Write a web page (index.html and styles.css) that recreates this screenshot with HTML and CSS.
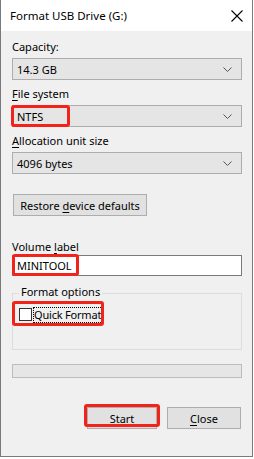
FILE: index.html
```html
<!DOCTYPE html>
<html>
<head>
<meta charset="UTF-8">
<title>Format USB Drive (G:)</title>
<link rel="stylesheet" href="styles.css">
</head>
<body>
<div class="window">
    <div class="titlebar">
        <span class="title">Format USB Drive (G:)</span>
        <svg class="close-x" width="12" height="12" viewBox="0 0 12 12">
            <path d="M0.5 0.5 L11.5 11.5 M11.5 0.5 L0.5 11.5" stroke="#000" stroke-width="1.1" fill="none"/>
        </svg>
    </div>

    <div class="content">
        <div class="label first">Capacity:</div>
        <div class="select">
            <span>14.3 GB</span>
            <svg class="caret" width="9" height="5" viewBox="0 0 9 5"><path d="M0.5 0.5 L4.5 4.5 L8.5 0.5" stroke="#555" fill="none"/></svg>
        </div>

        <div class="label"><u>F</u>ile system</div>
        <div class="select">
            <span>NTFS</span>
            <svg class="caret" width="9" height="5" viewBox="0 0 9 5"><path d="M0.5 0.5 L4.5 4.5 L8.5 0.5" stroke="#555" fill="none"/></svg>
            <div class="mark mark-ntfs"></div>
        </div>

        <div class="label"><u>A</u>llocation unit size</div>
        <div class="select">
            <span>4096 bytes</span>
            <svg class="caret" width="9" height="5" viewBox="0 0 9 5"><path d="M0.5 0.5 L4.5 4.5 L8.5 0.5" stroke="#555" fill="none"/></svg>
        </div>

        <div class="btn restore"><span>Restore <u>d</u>evice defaults</span></div>

        <div class="label vol">Volume <u>l</u>abel</div>
        <div class="textbox">
            <span>MINITOOL</span>
            <div class="mark mark-vol"></div>
        </div>

        <div class="group">
            <span class="legend">Format options</span>
            <div class="check-row">
                <span class="checkbox"></span>
                <span class="focus">Quick Format</span>
                <div class="mark mark-quick"></div>
            </div>
        </div>

        <div class="progress"></div>

        <div class="buttons">
            <div class="btn start"><span><u>S</u>tart</span><div class="mark mark-start"></div></div>
            <div class="btn close"><span><u>C</u>lose</span></div>
        </div>
    </div>
</div>
</body>
</html>
```

FILE: styles.css
```css
/* Format dialog */
body{
    margin: 0;
    background: #fff;
    font-family: "Noto Sans", "Open Sans", sans-serif;
    font-size: 11px;
    color: #000;
}
u{
    text-decoration-thickness: 1px;
    text-underline-offset: 2px;
}
.window{
    width: 253px;
    height: 457px;
    box-sizing: border-box;
    border: 1px solid #7a7a7a;
    border-top: none;
    background: #f0f0f0;
}
.titlebar{
    height: 31px;
    background: #fff;
    display: flex;
    align-items: center;
    justify-content: space-between;
    padding: 0 9px 0 9px;
}
.title{
    font-size: 11.5px;
}
.content{
    padding-left: 11px;
}
.label{
    height: 16px;
    line-height: 16px;
    margin-top: 6px;
    margin-bottom: 3px;
}
.label.first{
    margin-top: 8px;
}
.select{
    position: relative;
    width: 230px;
    height: 22px;
    box-sizing: border-box;
    border: 1px solid #adadad;
    background: #e5e5e5;
    display: flex;
    align-items: center;
    justify-content: space-between;
    padding: 0 9px 0 4px;
}
.caret{
    margin-top: 1px;
}
.btn{
    position: relative;
    height: 22px;
    box-sizing: border-box;
    border: 1px solid #adadad;
    background: #e1e1e1;
    display: flex;
    align-items: center;
    justify-content: center;
}
.restore{
    width: 134px;
    margin-left: 1px;
    margin-top: 20px;
}
.label.vol{
    margin-top: 23px;
    margin-bottom: 0;
}
.textbox{
    position: relative;
    width: 230px;
    height: 21px;
    box-sizing: border-box;
    border: 1px solid #7a7a7a;
    background: #fff;
    display: flex;
    align-items: center;
    padding-left: 4px;
}
.group{
    position: relative;
    width: 230px;
    height: 57px;
    box-sizing: border-box;
    border: 1px solid #dcdcdc;
    margin-top: 17px;
}
.legend{
    position: absolute;
    left: 6px;
    top: -10px;
    padding: 0 2px;
    background: #f0f0f0;
    line-height: 16px;
}
.check-row{
    position: relative;
    display: flex;
    align-items: center;
    margin: 12px 0 0 6px;
    height: 17px;
}
.checkbox{
    flex: none;
    width: 13px;
    height: 13px;
    box-sizing: border-box;
    border: 1px solid #333;
    background: #fff;
}
.focus{
    flex: none;
    white-space: nowrap;
    margin-left: 1px;
    padding: 0 1px 0 0;
    border: 1px dotted #000;
    line-height: 14px;
    letter-spacing: -0.2px;
}
.progress{
    width: 230px;
    height: 14px;
    box-sizing: border-box;
    border: 1px solid #bcbcbc;
    background: #e6e6e6;
    margin-top: 14px;
}
.buttons{
    display: flex;
    margin-top: 29px;
    margin-left: 75px;
    gap: 10px;
}
.start{
    width: 70px;
}
.close{
    width: 74px;
}
.mark{
    position: absolute;
    border: 3px solid #f2231b;
    border-radius: 3px;
}
.mark-ntfs{
    left: -2px;
    top: -1px;
    width: 53px;
    height: 16px;
}
.mark-vol{
    left: -1px;
    top: -2px;
    width: 61px;
    height: 16px;
}
.mark-quick{
    left: -7px;
    top: -5px;
    width: 86px;
    height: 19px;
}
.mark-start{
    left: -4px;
    top: -4px;
    width: 70px;
    height: 17px;
}
```
